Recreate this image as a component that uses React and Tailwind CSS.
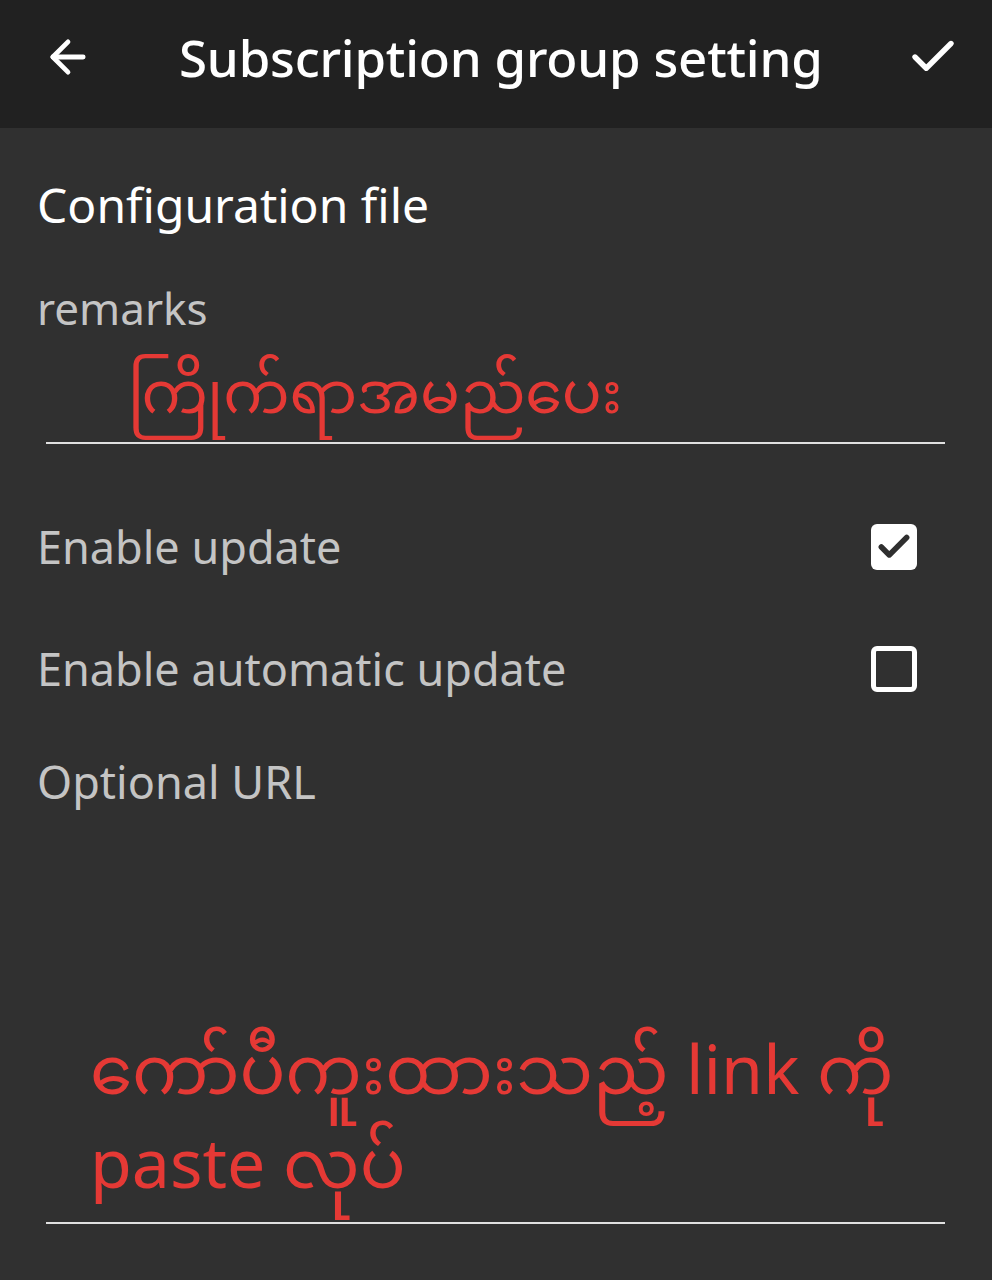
import { ArrowLeft, Check } from 'lucide-react';

const sans = { fontFamily: '"Noto Sans", "Open Sans", "Noto Sans Myanmar", "Padauk", sans-serif' };

const CheckRow = ({ label, checked }) => (
  <div className="flex items-center justify-between h-[122px] pr-[75px]">
    <span className="text-[45px] text-[#c4c4c4]">{label}</span>
    {checked ? (
      <div className="w-[46px] h-[46px] rounded-[6px] bg-white flex items-center justify-center">
        <Check className="w-[38px] h-[38px] text-[#2f2f2f]" strokeWidth={3.5} />
      </div>
    ) : (
      <div className="w-[46px] h-[46px] rounded-[6px] border-[5px] border-white" />
    )}
  </div>
);

export default function App() {
  return (
    <div className="w-[992px] h-[1280px] bg-[#303030] overflow-hidden" style={sans}>
      {/* toolbar */}
      <div className="h-[128px] bg-[#212121] flex items-center pb-[14px]">
        <ArrowLeft className="ml-[42px] w-[52px] h-[52px] text-white" strokeWidth={2.2} />
        <h1 className="ml-[85px] text-[51px] text-white font-medium tracking-[-0.2px] flex-1">Subscription group setting</h1>
        <Check className="mr-[32px] w-[54px] h-[54px] text-white" strokeWidth={2.4} />
      </div>

      <div className="pl-[37px]">
        <div className="pt-[42px] text-[48px] text-white leading-[70px]">Configuration file</div>

        <div className="mt-[43px] text-[44px] text-[#c4c4c4] leading-[50px]">remarks</div>
        <div className="ml-[9px] mr-[47px] border-b-2 border-[#e0e0e0] h-[111px] pt-[6px] flex items-center">
          <span className="ml-[82px] text-[59px] text-[#e53935] leading-none">ကြိုက်ရာအမည်ပေး</span>
        </div>

        <div className="mt-[42px]">
          <CheckRow label="Enable update" checked />
          <CheckRow label="Enable automatic update" checked={false} />
        </div>

        <div className="mt-[22px] text-[45px] text-[#c4c4c4] leading-[60px]">Optional URL</div>

        <div className="ml-[9px] mr-[47px] border-b-2 border-[#e0e0e0] pt-[209px] pb-[13px]">
          <div className="ml-[44px] text-[68px] text-[#e53935] leading-[94px]">
            ကော်ပီကူးထားသည့် link ကို
            <br />
            paste လုပ်
          </div>
        </div>
      </div>
    </div>
  );
}
